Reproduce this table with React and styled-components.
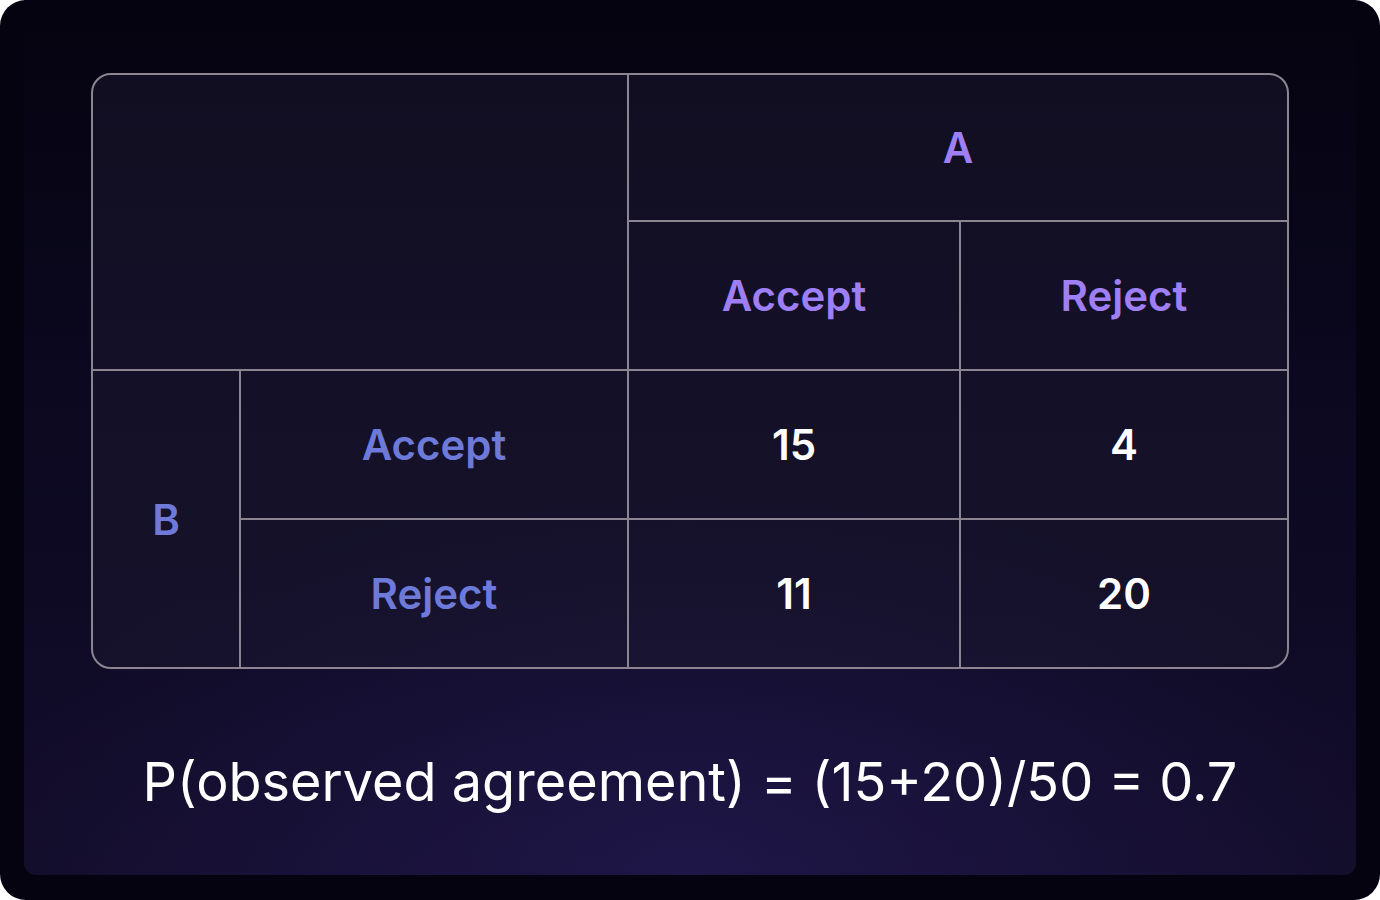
import React from "react";
import styled, { createGlobalStyle } from "styled-components";

const Global = createGlobalStyle`
  html, body { margin: 0; padding: 0; background: #ffffff; }
  body { font-family: Inter, "Noto Sans", sans-serif; }
`;

const Frame = styled.div`
  width: 1380px;
  height: 900px;
  border-radius: 26px;
  background: #05030f;
  overflow: hidden;
  display: flex;
  justify-content: center;
`;

const Panel = styled.div`
  width: 1332px;
  height: 875px;
  border-radius: 0 0 12px 12px;
  background:
    radial-gradient(ellipse 55% 45% at 50% 100%, rgba(40, 30, 95, 0.55) 0%, rgba(40, 30, 95, 0) 100%),
    linear-gradient(to bottom, #05030f 0%, #0b0820 45%, #130d2a 100%);
  display: flex;
  flex-direction: column;
  align-items: center;
  padding-top: 73px;
  box-sizing: border-box;
`;

const Table = styled.div`
  width: 1198px;
  box-sizing: border-box;
  border: 2px solid #8a8590;
  border-radius: 20px;
  overflow: hidden;
  background: rgba(28, 24, 48, 0.55);
  display: grid;
  grid-template-columns: 148px 388px 332px 326px;
  grid-template-rows: 147px 149px 149px 147px;
`;

const Cell = styled.div`
  display: flex;
  align-items: center;
  justify-content: center;
  box-sizing: border-box;
  border-right: ${(p) => (p.$noRight ? "none" : "2px solid #8a8590")};
  border-bottom: ${(p) => (p.$noBottom ? "none" : "2px solid #8a8590")};
  grid-column: ${(p) => p.$col || "auto"};
  grid-row: ${(p) => p.$row || "auto"};
  font-family: Inter, "Noto Sans", sans-serif;
  font-size: 42px;
  font-weight: 600;
  color: ${(p) =>
    p.$tone === "head" ? "#9e7ff5" : p.$tone === "side" ? "#6e7ad9" : "#ffffff"};
`;

const Formula = styled.div`
  margin-top: 80px;
  font-family: Inter, "Noto Sans", sans-serif;
  font-size: 54px;
  font-weight: 400;
  color: #ffffff;
  white-space: nowrap;
`;

export default function App() {
  return (
    <>
      <Global />
      <Frame>
        <Panel>
          <Table>
            <Cell $col="1 / 3" $row="1 / 3" />
            <Cell $col="3 / 5" $row="1" $tone="head" $noRight>A</Cell>
            <Cell $col="3" $row="2" $tone="head">Accept</Cell>
            <Cell $col="4" $row="2" $tone="head" $noRight>Reject</Cell>
            <Cell $col="1" $row="3 / 5" $tone="side" $noBottom>B</Cell>
            <Cell $col="2" $row="3" $tone="side">Accept</Cell>
            <Cell $col="3" $row="3">15</Cell>
            <Cell $col="4" $row="3" $noRight>4</Cell>
            <Cell $col="2" $row="4" $tone="side" $noBottom>Reject</Cell>
            <Cell $col="3" $row="4" $noBottom>11</Cell>
            <Cell $col="4" $row="4" $noRight $noBottom>20</Cell>
          </Table>
          <Formula>P(observed agreement) = (15+20)/50 = 0.7</Formula>
        </Panel>
      </Frame>
    </>
  );
}
